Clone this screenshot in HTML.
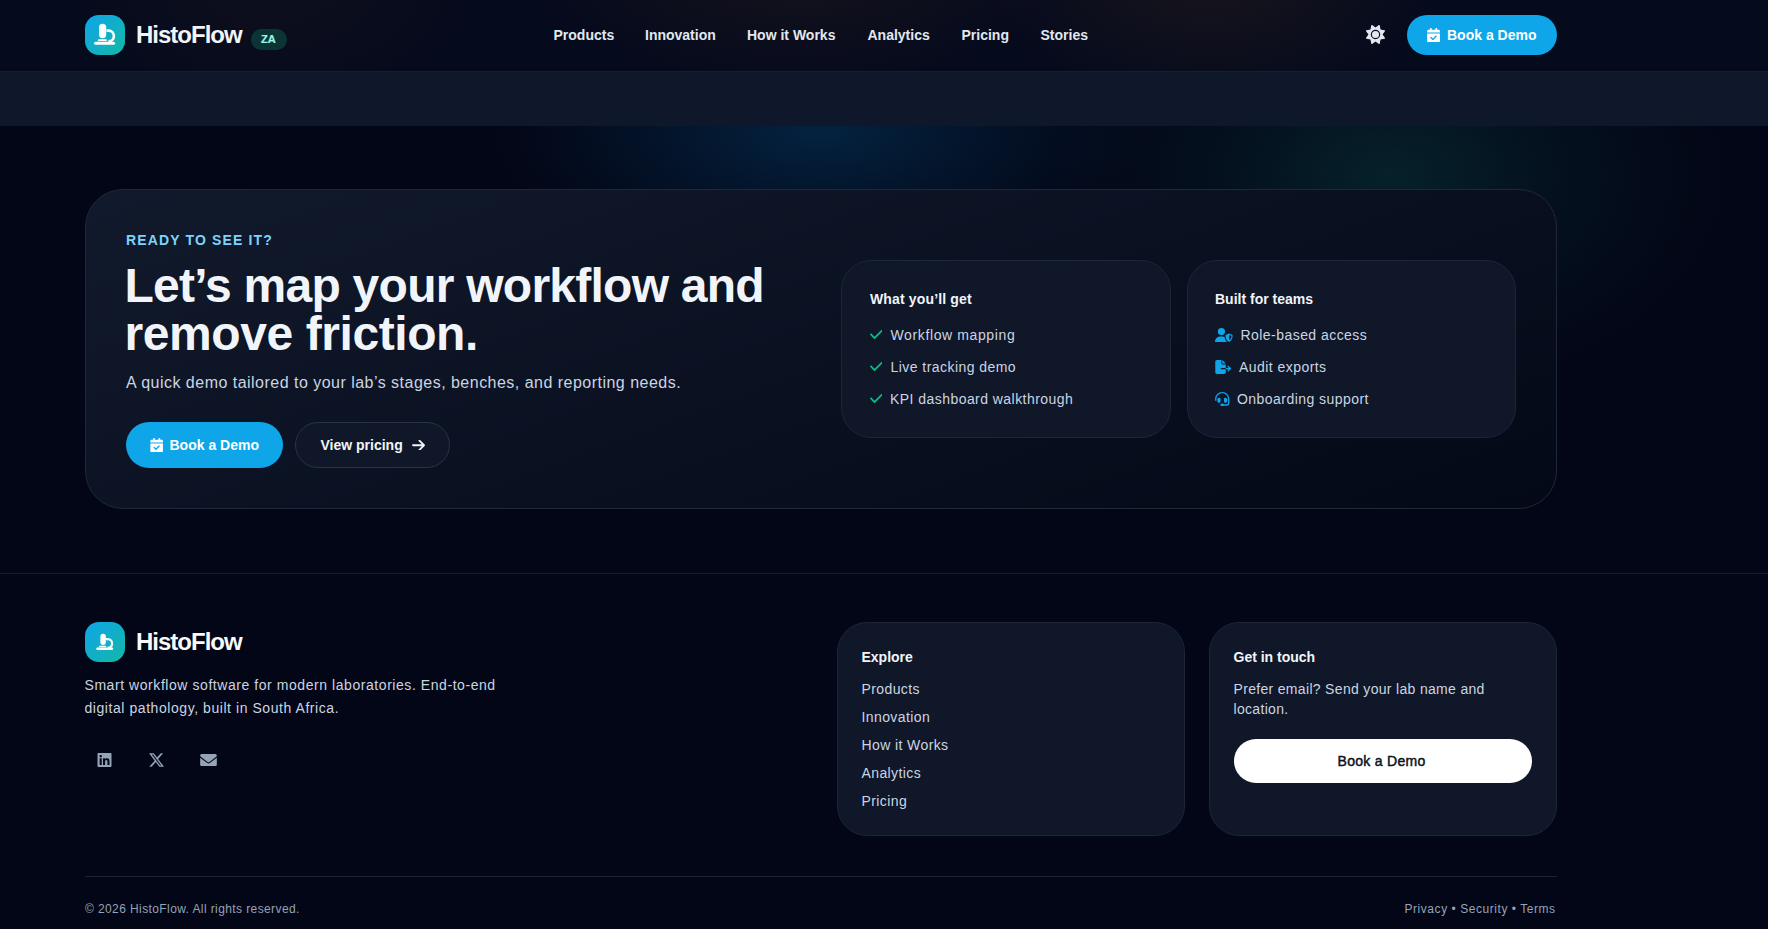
<!DOCTYPE html>
<html>
<head>
<meta charset="utf-8">
<style>
*{box-sizing:border-box;margin:0;padding:0}
html,body{width:1768px;height:929px;overflow:hidden}
body{position:relative;background:#030616;font-family:"Liberation Sans",sans-serif;color:#e5e7eb}
.abs{position:absolute}
.t{position:absolute;white-space:nowrap;line-height:1}
svg{position:absolute;display:block}
#hdr{left:0;top:0;width:1768px;height:72px;background:#050a1c;border-bottom:1px solid #171e2f;overflow:hidden}
#band{left:0;top:72px;width:1768px;height:54px;background:#0f172a}
.logo{width:40px;height:40px;border-radius:14px;background:linear-gradient(135deg,#0ea5e9 0%,#14b8a6 100%);overflow:hidden}
.nav{font-size:14px;font-weight:700;color:#e2e8f0}
.card{border:1px solid #1c2638;background:#0f1729}
.h4{font-size:14px;font-weight:700;color:#f1f5f9}
.li{font-size:14px;color:#cbd5e1;letter-spacing:0.45px}
.fl{font-size:14px;color:#cbd5e1;letter-spacing:0.4px}
</style>
</head>
<body>
<!-- page glows -->
<div class="abs" style="left:490px;top:-20px;width:660px;height:300px;background:radial-gradient(closest-side,rgba(6,100,160,0.30),rgba(6,100,160,0.12) 55%,rgba(6,100,160,0))"></div>
<div class="abs" style="left:1050px;top:-45px;width:680px;height:440px;background:radial-gradient(closest-side,rgba(16,150,130,0.19),rgba(16,150,130,0.07) 50%,rgba(16,150,130,0))"></div>

<!-- header -->
<div id="hdr" class="abs">
  <div class="abs" style="left:60px;top:-150px;width:420px;height:260px;background:radial-gradient(closest-side,rgba(60,40,35,0.18),rgba(60,40,35,0))"></div>
  <div class="abs" style="left:520px;top:-200px;width:560px;height:290px;background:radial-gradient(closest-side,rgba(70,45,30,0.30),rgba(70,45,30,0))"></div>
  <div class="abs" style="left:980px;top:-170px;width:460px;height:280px;background:radial-gradient(closest-side,rgba(70,48,30,0.30),rgba(70,48,30,0))"></div>
  <div class="abs logo" style="left:85px;top:15px">
    <svg width="40" height="40" viewBox="0 0 40 40" style="left:0;top:0">
      <rect x="14" y="8.8" width="7.2" height="14.4" rx="3.6" fill="#fff"/>
      <path d="M21.5 15.6H23.5A5.4 5.4 0 0 1 23.5 26.4" fill="none" stroke="#fff" stroke-width="2.6"/>
      <rect x="12.9" y="24.3" width="9" height="1.8" rx="0.9" fill="#fff"/>
      <rect x="9.1" y="26.8" width="20.9" height="3" rx="1.5" fill="#fff"/>
    </svg>
  </div>
  <div class="t" style="left:136px;top:22.7px;font-size:24px;font-weight:700;letter-spacing:-1px;color:#f1f5f9">HistoFlow</div>
  <div class="abs" style="left:251px;top:29px;width:36px;height:21px;border-radius:11px;background:#0d3434"></div>
  <div class="t" style="left:261px;top:33.6px;font-size:11px;font-weight:700;color:#99f6e4;-webkit-text-stroke:0.2px #99f6e4">ZA</div>
  <div class="t nav" style="left:553.5px;top:28.2px">Products</div>
  <div class="t nav" style="left:645px;top:28.2px">Innovation</div>
  <div class="t nav" style="left:747px;top:28.2px">How it Works</div>
  <div class="t nav" style="left:867.5px;top:28.2px">Analytics</div>
  <div class="t nav" style="left:961.5px;top:28.2px">Pricing</div>
  <div class="t nav" style="left:1040.5px;top:28.2px">Stories</div>
  <svg width="19" height="19" viewBox="0 0 512 512" style="left:1366px;top:24.7px"><path fill="#e2e8f0" fill-rule="evenodd" d="M361.5 1.2c5 2.1 8.6 6.6 9.6 11.9L391 121l107.9 19.8c5.3 1 9.8 4.6 11.9 9.6s1.5 10.7-1.6 15.2L446.9 256l62.3 90.3c3.1 4.5 3.7 10.2 1.6 15.2s-6.6 8.6-11.9 9.6L391 391 371.1 498.9c-1 5.3-4.6 9.8-9.6 11.9s-10.7 1.5-15.2-1.6L256 446.9l-90.3 62.3c-4.5 3.1-10.2 3.7-15.2 1.6s-8.6-6.6-9.6-11.9L121 391 13.1 371.1c-5.3-1-9.800-4.6-11.9-9.6s-1.5-10.7 1.6-15.2L65.1 256 2.8 165.7c-3.1-4.5-3.7-10.2-1.6-15.2s6.6-8.6 11.9-9.6L121 121 140.9 13.1c1-5.3 4.6-9.8 9.6-11.9s10.7-1.5 15.2 1.6L256 65.1 346.3 2.8c4.5-3.1 10.2-3.7 15.2-1.6zM384 256a128 128 0 1 0 -256 0 128 128 0 1 0 256 0zM352 256a96 96 0 1 1 -192 0 96 96 0 1 1 192 0z"/></svg>
  <div class="abs" style="left:1407px;top:15px;width:150px;height:40px;border-radius:20px;background:#0ea5e9"></div>
  <svg width="13.1" height="14.6" viewBox="0 0 448 512" style="left:1427.2px;top:27.5px"><path fill="#fff" d="M128 0c17.7 0 32 14.3 32 32V64H288V32c0-17.7 14.3-32 32-32s32 14.3 32 32V64h48c26.5 0 48 21.5 48 48v48H0V112C0 85.5 21.5 64 48 64H96V32c0-17.700 14.3-32 32-32zM0 192H448V464c0 26.5-21.5 48-48 48H48c-26.5 0-48-21.5-48-48V192zM329 305c9.4-9.4 9.4-24.6 0-33.9s-24.6-9.4-33.9 0l-95 95-47-47c-9.4-9.4-24.6-9.4-33.9 0s-9.4 24.6 0 33.9l64 64c9.4 9.4 24.6 9.4 33.9 0L329 305z"/></svg>
  <div class="t" style="left:1447px;top:28px;font-size:14px;font-weight:700;color:#fff">Book a Demo</div>
</div>
<div id="band" class="abs"></div>

<!-- hero card -->
<div class="abs" style="left:85px;top:189px;width:1472px;height:320px;border-radius:38px;border:1px solid #1e2839;background:linear-gradient(160deg,#111a2c 0%,#0a1020 55%,#040917 100%)"></div>
<div class="t" style="left:126px;top:233.2px;font-size:14px;font-weight:700;letter-spacing:1.15px;color:#7dd3fc">READY TO SEE IT?</div>
<div class="t" style="left:124.5px;top:261.6px;font-size:48px;font-weight:700;letter-spacing:-0.75px;color:#f1f5f9;line-height:48px">Let’s map your workflow and</div>
<div class="t" style="left:124.5px;top:309.6px;font-size:48px;font-weight:700;letter-spacing:-0.42px;color:#f1f5f9;line-height:48px">remove friction.</div>
<div class="t" style="left:126px;top:374.5px;font-size:16px;letter-spacing:0.48px;color:#cbd5e1">A quick demo tailored to your lab’s stages, benches, and reporting needs.</div>

<div class="abs" style="left:126px;top:422px;width:157px;height:46px;border-radius:23px;background:#0ea5e9"></div>
<svg width="13.3" height="14.4" viewBox="0 0 448 512" style="left:149.5px;top:437.5px"><path fill="#fff" d="M128 0c17.7 0 32 14.3 32 32V64H288V32c0-17.7 14.3-32 32-32s32 14.3 32 32V64h48c26.5 0 48 21.5 48 48v48H0V112C0 85.5 21.5 64 48 64H96V32c0-17.700 14.3-32 32-32zM0 192H448V464c0 26.5-21.5 48-48 48H48c-26.5 0-48-21.5-48-48V192zM329 305c9.4-9.4 9.4-24.6 0-33.9s-24.6-9.4-33.9 0l-95 95-47-47c-9.4-9.4-24.6-9.4-33.9 0s-9.4 24.6 0 33.9l64 64c9.4 9.4 24.6 9.4 33.9 0L329 305z"/></svg>
<div class="t" style="left:169.5px;top:438.3px;font-size:14px;font-weight:700;color:#fff">Book a Demo</div>

<div class="abs" style="left:295px;top:422px;width:155px;height:46px;border-radius:23px;background:#0f1728;border:1px solid #2a3446"></div>
<div class="t" style="left:320.5px;top:438.3px;font-size:14px;font-weight:700;color:#f1f5f9">View pricing</div>
<svg width="13" height="10.5" viewBox="0 73 448 366" style="left:412px;top:439.5px"><path fill="#f1f5f9" d="M438.6 278.6c12.5-12.5 12.5-32.8 0-45.3l-160-160c-12.5-12.5-32.8-12.5-45.3 0s-12.5 32.8 0 45.3L338.8 224 32 224c-17.7 0-32 14.3-32 32s14.3 32 32 32l306.7 0L233.4 393.4c-12.5 12.5-12.5 32.8 0 45.3s32.8 12.5 45.3 0l160-160z"/></svg>

<!-- inner cards -->
<div class="abs card" style="left:841px;top:260px;width:330px;height:178px;border-radius:30px"></div>
<div class="abs card" style="left:1187px;top:260px;width:329px;height:178px;border-radius:30px"></div>

<div class="t h4" style="left:870px;top:292.2px;letter-spacing:0.15px">What you’ll get</div>
<svg width="12.6" height="8.9" viewBox="0 96 448 320" style="left:869.8px;top:330.4px"><path fill="#10b981" d="M438.6 105.4c12.5 12.5 12.5 32.8 0 45.3l-256 256c-12.5 12.5-32.8 12.5-45.3 0l-128-128c-12.5-12.5-12.5-32.8 0-45.3s32.8-12.5 45.3 0L160 338.7 393.4 105.4c12.5-12.5 32.8-12.5 45.3 0z"/></svg>
<svg width="12.6" height="8.9" viewBox="0 96 448 320" style="left:869.8px;top:362.4px"><path fill="#10b981" d="M438.6 105.4c12.5 12.5 12.5 32.8 0 45.3l-256 256c-12.5 12.5-32.8 12.5-45.3 0l-128-128c-12.5-12.5-12.5-32.8 0-45.3s32.8-12.5 45.3 0L160 338.7 393.4 105.4c12.5-12.5 32.8-12.5 45.3 0z"/></svg>
<svg width="12.6" height="8.9" viewBox="0 96 448 320" style="left:869.8px;top:394.4px"><path fill="#10b981" d="M438.6 105.4c12.5 12.5 12.5 32.8 0 45.3l-256 256c-12.5 12.5-32.8 12.5-45.3 0l-128-128c-12.5-12.5-12.5-32.8 0-45.3s32.8-12.5 45.3 0L160 338.7 393.4 105.4c12.5-12.5 32.8-12.5 45.3 0z"/></svg>
<div class="t li" style="left:890.5px;top:328.2px;letter-spacing:0.62px">Workflow mapping</div>
<div class="t li" style="left:890.5px;top:360.2px">Live tracking demo</div>
<div class="t li" style="left:890px;top:392.2px">KPI dashboard walkthrough</div>

<div class="t h4" style="left:1215px;top:292.2px">Built for teams</div>
<svg width="18" height="14.4" viewBox="0 0 640 512" style="left:1215px;top:327.7px"><circle cx="228" cy="128" r="128" fill="#0ea5e9"/><path fill="#0ea5e9" d="M180 300H276C336 300 388 326 420 368V512H30C13 512 0 499 0 482 0 382 80 300 180 300Z"/><path fill="#111a2b" d="M500 150L660 215V300C660 410 590 490 500 540C410 490 340 410 340 300V215Z"/><path fill="#0ea5e9" d="M500 196L624 246V300C624 390 570 452 500 494C430 452 376 390 376 300V246Z"/><path fill="#111a2b" d="M506 246L584 278V304C584 364 550 410 506 440Z"/></svg>
<svg width="16.3" height="14" viewBox="0 0 576 512" style="left:1215px;top:359.9px"><path fill="#0ea5e9" d="M0 64C0 28.7 28.7 0 64 0H224V128c0 17.7 14.3 32 32 32H384V288H216c-13.3 0-24 10.7-24 24s10.7 24 24 24H384V448c0 35.3-28.7 64-64 64H64c-35.3 0-64-28.7-64-64V64zM384 336V288H494.1l-39-39c-9.4-9.4-9.4-24.6 0-33.9s24.6-9.4 33.9 0l80 80c9.4 9.4 9.4 24.6 0 33.9l-80 80c-9.4 9.4-24.6 9.4-33.9 0s-9.4-24.6 0-33.9l39-39H384zm0-208H256V0L384 128z"/></svg>
<svg width="14.5" height="14.3" viewBox="0 0 512 512" style="left:1215px;top:391.7px"><path fill="#0ea5e9" d="M256 48C141.1 48 48 141.1 48 256v40c0 13.3-10.7 24-24 24s-24-10.7-24-24V256C0 114.6 114.6 0 256 0S512 114.6 512 256V400.1c0 48.6-39.4 88-88.1 88L313.6 488c-8.300 14.3-23.8 24-41.6 24H240c-26.5 0-48-21.5-48-48s21.5-48 48-48h32c17.8 0 33.3 9.7 41.6 24l110.4 .1c22.1 0 40-17.9 40-40V256c0-114.9-93.1-208-208-208zM144 208h16c17.7 0 32 14.3 32 32V352c0 17.7-14.3 32-32 32H144c-35.3 0-64-28.700-64-64V272c0-35.3 28.7-64 64-64zm224 0c35.3 0 64 28.7 64 64v48c0 35.3-28.7 64-64 64H352c-17.7 0-32-14.3-32-32V240c0-17.7 14.3-32 32-32h16z"/></svg>
<div class="t li" style="left:1240.5px;top:328.2px">Role-based access</div>
<div class="t li" style="left:1239px;top:360.2px">Audit exports</div>
<div class="t li" style="left:1237px;top:392.2px">Onboarding support</div>

<!-- divider -->
<div class="abs" style="left:0;top:573px;width:1768px;height:1px;background:#161e2e"></div>

<!-- footer -->
<div class="abs logo" style="left:85px;top:622px">
  <svg width="40" height="40" viewBox="0 0 40 40" style="left:0;top:0">
    <rect x="15.4" y="11.7" width="5.4" height="11.2" rx="2.7" fill="#fff"/>
    <path d="M20 17.1H22.7A4.4 4.4 0 0 1 22.7 25.9" fill="none" stroke="#fff" stroke-width="2.2"/>
    <rect x="13.8" y="23.7" width="7.4" height="1.5" rx="0.75" fill="#fff"/>
    <rect x="11.3" y="25.5" width="16.9" height="2.4" rx="1.2" fill="#fff"/>
  </svg>
</div>
<div class="t" style="left:136px;top:629.7px;font-size:24px;font-weight:700;letter-spacing:-1px;color:#f8fafc">HistoFlow</div>
<div class="t" style="left:84.5px;top:678.1px;font-size:14px;letter-spacing:0.56px;color:#cbd5e1;line-height:23px;top:673.5px">Smart workflow software for modern laboratories. End-to-end<br>digital pathology, built in South Africa.</div>

<svg width="15" height="14" viewBox="0 32 448 448" style="left:97px;top:752.8px"><path fill="#94a3b8" d="M416 32H31.9C14.3 32 0 46.5 0 64.3v383.4C0 465.5 14.3 480 31.900 480H416c17.6 0 32-14.5 32-32.3V64.3c0-17.8-14.4-32.3-32-32.3zM135.4 416H69V202.2h66.5V416zm-33.2-243c-21.3 0-38.5-17.3-38.5-38.5S80.9 96 102.2 96c21.2 0 38.5 17.3 38.5 38.5 0 21.3-17.2 38.5-38.5 38.5zm282.1 243h-66.4V312c0-24.8-.5-56.7-34.5-56.7-34.6 0-39.9 27-39.9 54.9V416h-66.4V202.2h63.7v29.2h.9c8.9-16.8 30.6-34.5 62.9-34.5 67.2 0 79.7 44.3 79.7 101.9V416z"/></svg>
<svg width="15" height="14" viewBox="26 48 461 416" style="left:149px;top:752.8px"><path fill="#94a3b8" d="M389.2 48h70.6L305.6 224.2 487 464H345L233.7 318.6 106.5 464H35.8L200.7 275.5 26.8 48H172.4L272.9 180.9 389.2 48zM364.4 421.8h39.1L151.1 88h-42L364.4 421.8z"/></svg>
<svg width="17" height="12.5" viewBox="0 64 512 384" style="left:200px;top:753.8px"><path fill="#94a3b8" d="M48 64C21.5 64 0 85.5 0 112c0 15.1 7.1 29.3 19.2 38.4L236.8 313.6c11.4 8.5 27 8.5 38.4 0L492.8 150.4c12.1-9.100 19.2-23.3 19.2-38.4c0-26.5-21.5-48-48-48H48zM0 176V384c0 35.3 28.7 64 64 64H448c35.3 0 64-28.7 64-64V176L294.4 339.2c-22.8 17.1-54 17.1-76.8 0L0 176z"/></svg>

<div class="abs card" style="left:837px;top:622px;width:348px;height:214px;border-radius:30px"></div>
<div class="abs card" style="left:1209px;top:622px;width:348px;height:214px;border-radius:30px"></div>

<div class="t h4" style="left:861.5px;top:650.2px">Explore</div>
<div class="t fl" style="left:861.5px;top:682.2px">Products</div>
<div class="t fl" style="left:861.5px;top:710.2px">Innovation</div>
<div class="t fl" style="left:861.5px;top:738.2px">How it Works</div>
<div class="t fl" style="left:861.5px;top:766.2px">Analytics</div>
<div class="t fl" style="left:861.5px;top:794.2px">Pricing</div>

<div class="t h4" style="left:1233.5px;top:650.2px">Get in touch</div>
<div class="t fl" style="left:1233.5px;top:678.6px;line-height:20px;letter-spacing:0.32px">Prefer email? Send your lab name and<br>location.</div>
<div class="abs" style="left:1234px;top:739px;width:298px;height:44px;border-radius:22px;background:#fff"></div>
<div class="t" style="left:1337.5px;top:754.1px;font-size:14px;letter-spacing:0.3px;color:#0b1222;-webkit-text-stroke:0.45px #0b1222">Book a Demo</div>

<div class="abs" style="left:85px;top:876px;width:1472px;height:1px;background:#1c2536"></div>
<div class="t" style="left:85px;top:902.8px;font-size:12px;letter-spacing:0.4px;color:#94a3b8">© 2026 HistoFlow. All rights reserved.</div>
<div class="t" style="left:1404.5px;top:902.8px;font-size:12px;letter-spacing:0.55px;color:#94a3b8">Privacy • Security • Terms</div>
</body>
</html>
